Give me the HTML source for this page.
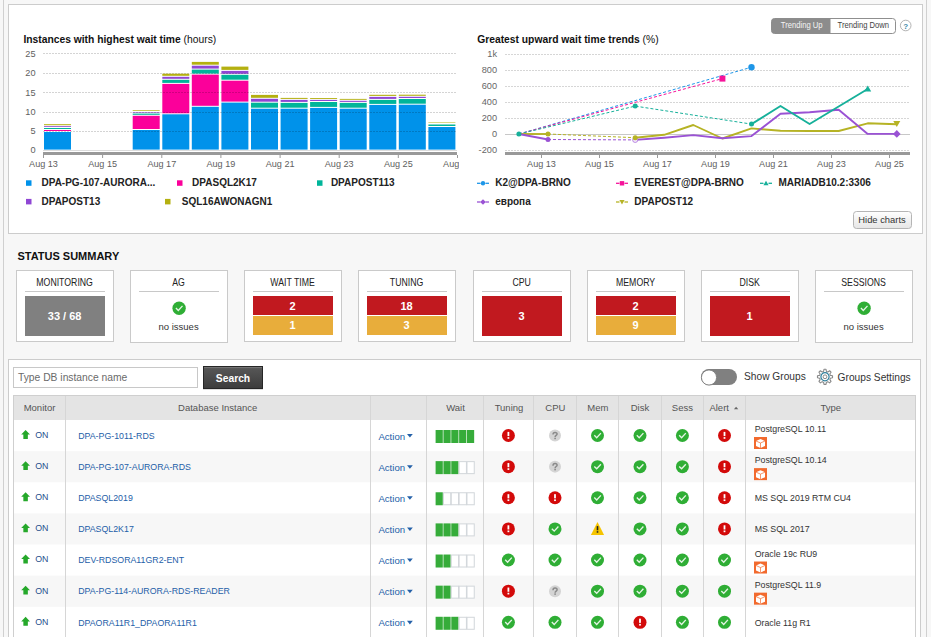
<!DOCTYPE html>
<html><head><meta charset="utf-8"><style>
html,body{margin:0;padding:0;width:931px;height:637px;overflow:hidden;background:#f7f7f7;}
body{position:relative;font-family:"Liberation Sans", sans-serif;}
svg text{font-family:"Liberation Sans", sans-serif;}
</style></head><body>
<svg width="931" height="637" viewBox="0 0 931 637" style="position:absolute;left:0;top:0">
<defs><clipPath id="c1"><rect x="0" y="150" width="459" height="30"/></clipPath></defs>
<line x1="3.5" y1="0" x2="3.5" y2="637" stroke="#d0d0d0"/>
<line x1="926.5" y1="0" x2="926.5" y2="637" stroke="#d0d0d0"/>
<rect x="8.5" y="4.5" width="914" height="229" fill="#fff" stroke="#cccccc"/>
<text x="35.5" y="56.8" text-anchor="end" font-size="9.2" fill="#606060">25</text>
<text x="35.5" y="76.3" text-anchor="end" font-size="9.2" fill="#606060">20</text>
<text x="35.5" y="95.8" text-anchor="end" font-size="9.2" fill="#606060">15</text>
<text x="35.5" y="115.3" text-anchor="end" font-size="9.2" fill="#606060">10</text>
<text x="35.5" y="133.9" text-anchor="end" font-size="9.2" fill="#606060">5</text>
<text x="35.5" y="152.60000000000002" text-anchor="end" font-size="9.2" fill="#606060">0</text>
<rect x="44.0" y="132" width="27" height="17.6" fill="#0092ea"/>
<rect x="44.0" y="130" width="27" height="1.0" fill="#fb009a"/>
<rect x="44.0" y="128" width="27" height="1.0" fill="#00b59a"/>
<rect x="44.0" y="126.2" width="27" height="0.8" fill="#8f46d4"/>
<rect x="44.0" y="124.2" width="27" height="1.0" fill="#b4b010"/>
<rect x="132.7" y="130" width="27" height="19.6" fill="#0092ea"/>
<rect x="132.7" y="115.8" width="27" height="13.2" fill="#fb009a"/>
<rect x="132.7" y="113.6" width="27" height="1.2" fill="#00b59a"/>
<rect x="132.7" y="112" width="27" height="0.6" fill="#8f46d4"/>
<rect x="132.7" y="110.3" width="27" height="0.7" fill="#b4b010"/>
<rect x="162.3" y="114.3" width="27" height="35.3" fill="#0092ea"/>
<rect x="162.3" y="83.9" width="27" height="29.4" fill="#fb009a"/>
<rect x="162.3" y="79.8" width="27" height="3.1" fill="#00b59a"/>
<rect x="162.3" y="76.8" width="27" height="2.0" fill="#8f46d4"/>
<rect x="162.3" y="73.7" width="27" height="2.1" fill="#b4b010"/>
<rect x="191.8" y="106.8" width="27" height="42.8" fill="#0092ea"/>
<rect x="191.8" y="74.6" width="27" height="31.2" fill="#fb009a"/>
<rect x="191.8" y="69.6" width="27" height="4.0" fill="#00b59a"/>
<rect x="191.8" y="65.7" width="27" height="2.9" fill="#8f46d4"/>
<rect x="191.8" y="61.9" width="27" height="2.8" fill="#b4b010"/>
<rect x="221.4" y="102.6" width="27" height="47.0" fill="#0092ea"/>
<rect x="221.4" y="80.7" width="27" height="20.9" fill="#fb009a"/>
<rect x="221.4" y="74.8" width="27" height="4.9" fill="#00b59a"/>
<rect x="221.4" y="70.9" width="27" height="2.9" fill="#8f46d4"/>
<rect x="221.4" y="66.6" width="27" height="3.3" fill="#b4b010"/>
<rect x="251.0" y="108.7" width="27" height="40.9" fill="#0092ea"/>
<rect x="251.0" y="102.7" width="27" height="5.0" fill="#00b59a"/>
<rect x="251.0" y="98.8" width="27" height="2.9" fill="#8f46d4"/>
<rect x="251.0" y="94.9" width="27" height="2.9" fill="#b4b010"/>
<rect x="280.6" y="108.7" width="27" height="40.9" fill="#0092ea"/>
<rect x="280.6" y="102.9" width="27" height="4.8" fill="#00b59a"/>
<rect x="280.6" y="99.9" width="27" height="2.0" fill="#8f46d4"/>
<rect x="280.6" y="97.9" width="27" height="1.0" fill="#b4b010"/>
<rect x="310.1" y="107.9" width="27" height="41.7" fill="#0092ea"/>
<rect x="310.1" y="102" width="27" height="4.9" fill="#00b59a"/>
<rect x="310.1" y="99.9" width="27" height="1.1" fill="#8f46d4"/>
<rect x="310.1" y="98" width="27" height="0.9" fill="#b4b010"/>
<rect x="339.7" y="108.7" width="27" height="40.9" fill="#0092ea"/>
<rect x="339.7" y="102.9" width="27" height="4.8" fill="#00b59a"/>
<rect x="339.7" y="100.8" width="27" height="1.1" fill="#8f46d4"/>
<rect x="339.7" y="98.9" width="27" height="0.9" fill="#b4b010"/>
<rect x="369.3" y="104.9" width="27" height="44.7" fill="#0092ea"/>
<rect x="369.3" y="99.9" width="27" height="4.0" fill="#00b59a"/>
<rect x="369.3" y="96.9" width="27" height="2.0" fill="#8f46d4"/>
<rect x="369.3" y="94.8" width="27" height="1.1" fill="#b4b010"/>
<rect x="398.8" y="104.7" width="27" height="44.9" fill="#0092ea"/>
<rect x="398.8" y="99" width="27" height="4.7" fill="#00b59a"/>
<rect x="398.8" y="96.8" width="27" height="1.2" fill="#8f46d4"/>
<rect x="398.8" y="94.7" width="27" height="1.1" fill="#b4b010"/>
<rect x="428.4" y="127" width="27" height="22.6" fill="#0092ea"/>
<rect x="428.4" y="124.5" width="27" height="1.5" fill="#00b59a"/>
<rect x="428.4" y="122" width="27" height="0.5" fill="#b4b010"/>
<line x1="43" y1="53.5" x2="457" y2="53.5" stroke="#000" stroke-opacity="0.17" stroke-width="1" stroke-dasharray="2,1"/>
<line x1="43" y1="73.5" x2="457" y2="73.5" stroke="#000" stroke-opacity="0.17" stroke-width="1" stroke-dasharray="2,1"/>
<line x1="43" y1="92.5" x2="457" y2="92.5" stroke="#000" stroke-opacity="0.17" stroke-width="1" stroke-dasharray="2,1"/>
<line x1="43" y1="112.5" x2="457" y2="112.5" stroke="#000" stroke-opacity="0.17" stroke-width="1" stroke-dasharray="2,1"/>
<line x1="43" y1="131.5" x2="457" y2="131.5" stroke="#000" stroke-opacity="0.17" stroke-width="1" stroke-dasharray="2,1"/>
<line x1="43" y1="150.5" x2="457" y2="150.5" stroke="#dcdcdc" stroke-width="1"/>
<rect x="43" y="152" width="414" height="3" fill="#999"/>
<line x1="43.5" y1="155" x2="43.5" y2="158" stroke="#999" stroke-width="1"/>
<line x1="102.6" y1="155" x2="102.6" y2="158" stroke="#999" stroke-width="1"/>
<line x1="161.8" y1="155" x2="161.8" y2="158" stroke="#999" stroke-width="1"/>
<line x1="220.9" y1="155" x2="220.9" y2="158" stroke="#999" stroke-width="1"/>
<line x1="280.1" y1="155" x2="280.1" y2="158" stroke="#999" stroke-width="1"/>
<line x1="339.2" y1="155" x2="339.2" y2="158" stroke="#999" stroke-width="1"/>
<line x1="398.3" y1="155" x2="398.3" y2="158" stroke="#999" stroke-width="1"/>
<line x1="457.5" y1="155" x2="457.5" y2="158" stroke="#999" stroke-width="1"/>
<g clip-path="url(#c1)">
<text x="43.5" y="166.5" text-anchor="middle" font-size="9.1" fill="#606060">Aug 13</text>
<text x="102.6" y="166.5" text-anchor="middle" font-size="9.1" fill="#606060">Aug 15</text>
<text x="161.8" y="166.5" text-anchor="middle" font-size="9.1" fill="#606060">Aug 17</text>
<text x="220.9" y="166.5" text-anchor="middle" font-size="9.1" fill="#606060">Aug 19</text>
<text x="280.1" y="166.5" text-anchor="middle" font-size="9.1" fill="#606060">Aug 21</text>
<text x="339.2" y="166.5" text-anchor="middle" font-size="9.1" fill="#606060">Aug 23</text>
<text x="398.3" y="166.5" text-anchor="middle" font-size="9.1" fill="#606060">Aug 25</text>
<text x="457.5" y="166.5" text-anchor="middle" font-size="9.1" fill="#606060">Aug 27</text>
</g>
<text x="23.4" y="43.2" font-size="10.3" fill="#111"><tspan font-weight="bold">Instances with highest wait time</tspan> (hours)</text>
<rect x="26" y="180.3" width="5.5" height="5.5" fill="#0092ea"/>
<text x="41.5" y="186.3" font-size="10" font-weight="bold" fill="#222">DPA-PG-107-AURORA...</text>
<rect x="177" y="180.3" width="5.5" height="5.5" fill="#fb009a"/>
<text x="192.1" y="186.3" font-size="10" font-weight="bold" fill="#222">DPASQL2K17</text>
<rect x="317" y="180.3" width="5.5" height="5.5" fill="#00b59a"/>
<text x="330.9" y="186.3" font-size="10" font-weight="bold" fill="#222">DPAPOST113</text>
<rect x="26" y="198.9" width="5.5" height="5.5" fill="#8f46d4"/>
<text x="41.5" y="204.9" font-size="10" font-weight="bold" fill="#222">DPAPOST13</text>
<rect x="165" y="198.9" width="5.5" height="5.5" fill="#b4b010"/>
<text x="181.8" y="204.9" font-size="10" font-weight="bold" fill="#222">SQL16AWONAGN1</text>
<line x1="505" y1="54.5" x2="910" y2="54.5" stroke="#d6d6d6" stroke-width="1" stroke-dasharray="2,1"/>
<text x="497" y="57.1" text-anchor="end" font-size="9.2" fill="#666">1k</text>
<line x1="505" y1="70.5" x2="910" y2="70.5" stroke="#d6d6d6" stroke-width="1" stroke-dasharray="2,1"/>
<text x="497" y="73.1" text-anchor="end" font-size="9.2" fill="#666">800</text>
<line x1="505" y1="86.5" x2="910" y2="86.5" stroke="#d6d6d6" stroke-width="1" stroke-dasharray="2,1"/>
<text x="497" y="89.1" text-anchor="end" font-size="9.2" fill="#666">600</text>
<line x1="505" y1="102.5" x2="910" y2="102.5" stroke="#d6d6d6" stroke-width="1" stroke-dasharray="2,1"/>
<text x="497" y="105.1" text-anchor="end" font-size="9.2" fill="#666">400</text>
<line x1="505" y1="118.5" x2="910" y2="118.5" stroke="#d6d6d6" stroke-width="1" stroke-dasharray="2,1"/>
<text x="497" y="121.1" text-anchor="end" font-size="9.2" fill="#666">200</text>
<text x="497" y="137.1" text-anchor="end" font-size="9.2" fill="#666">0</text>
<line x1="505" y1="150.5" x2="910" y2="150.5" stroke="#d6d6d6" stroke-width="1" stroke-dasharray="2,1"/>
<text x="497" y="153.1" text-anchor="end" font-size="9.2" fill="#666">-200</text>
<line x1="505" y1="134.5" x2="910" y2="134.5" stroke="#c8c8c8" stroke-width="1"/>
<rect x="505" y="152" width="405" height="3" fill="#999"/>
<line x1="541.5" y1="155" x2="541.5" y2="158" stroke="#999" stroke-width="1"/>
<text x="541.5" y="167" text-anchor="middle" font-size="9.1" fill="#606060">Aug 13</text>
<line x1="599.5" y1="155" x2="599.5" y2="158" stroke="#999" stroke-width="1"/>
<text x="599.5" y="167" text-anchor="middle" font-size="9.1" fill="#606060">Aug 15</text>
<line x1="657.5" y1="155" x2="657.5" y2="158" stroke="#999" stroke-width="1"/>
<text x="657.5" y="167" text-anchor="middle" font-size="9.1" fill="#606060">Aug 17</text>
<line x1="715.5" y1="155" x2="715.5" y2="158" stroke="#999" stroke-width="1"/>
<text x="715.5" y="167" text-anchor="middle" font-size="9.1" fill="#606060">Aug 19</text>
<line x1="773.5" y1="155" x2="773.5" y2="158" stroke="#999" stroke-width="1"/>
<text x="773.5" y="167" text-anchor="middle" font-size="9.1" fill="#606060">Aug 21</text>
<line x1="831.5" y1="155" x2="831.5" y2="158" stroke="#999" stroke-width="1"/>
<text x="831.5" y="167" text-anchor="middle" font-size="9.1" fill="#606060">Aug 23</text>
<line x1="889.5" y1="155" x2="889.5" y2="158" stroke="#999" stroke-width="1"/>
<text x="889.5" y="167" text-anchor="middle" font-size="9.1" fill="#606060">Aug 25</text>
<polyline points="518.9,134 751.5,67.2" fill="none" stroke="#1e96e8" stroke-width="1.0" stroke-dasharray="3,2" stroke-linejoin="round"/>
<polyline points="518.9,134 722.4,78.6" fill="none" stroke="#f5139a" stroke-width="1.0" stroke-dasharray="3,2" stroke-linejoin="round"/>
<polyline points="518.9,134 635.2,106.1 751.5,124.1" fill="none" stroke="#16b09a" stroke-width="1.0" stroke-dasharray="3,2" stroke-linejoin="round"/>
<polyline points="548.0,134 635.2,137.7" fill="none" stroke="#b6b325" stroke-width="1.0" stroke-dasharray="3,2" stroke-linejoin="round"/>
<polyline points="548.0,139.5 635.2,139.9" fill="none" stroke="#9a52d4" stroke-width="1.0" stroke-dasharray="3,2" stroke-linejoin="round"/>
<polyline points="518.9,134 548.0,134" fill="none" stroke="#b6b325" stroke-width="1.9" stroke-linejoin="round"/>
<polyline points="635.2,137.7 664.2,134.8 693.3,125 722.4,138.5 751.5,128.4 780.5,130.8 809.6,131 838.7,131 867.7,123.3 896.8,124.3" fill="none" stroke="#b6b325" stroke-width="1.9" stroke-linejoin="round"/>
<polyline points="518.9,134 548.0,139.5" fill="none" stroke="#9a52d4" stroke-width="1.9" stroke-linejoin="round"/>
<polyline points="635.2,139.9 664.2,137.7 693.3,135.1 722.4,138.2 751.5,136.1 780.5,113.7 809.6,112.2 838.7,109.7 867.7,133.9 896.8,133.9" fill="none" stroke="#9a52d4" stroke-width="1.9" stroke-linejoin="round"/>
<polyline points="751.5,124.1 780.5,106 809.6,124 867.7,89" fill="none" stroke="#16b09a" stroke-width="1.9" stroke-linejoin="round"/>
<circle cx="751.5" cy="67.2" r="3.2" fill="#1e96e8"/>
<rect x="719.4" y="75.6" width="6" height="6" fill="#f5139a"/>
<circle cx="548.0" cy="134" r="2.5" fill="#b6b325"/>
<circle cx="548.0" cy="139.5" r="2.5" fill="#9a52d4"/>
<circle cx="635.2" cy="139.9" r="2.6" fill="#f3e8fb" stroke="#9a52d4" stroke-width="0.6"/>
<circle cx="635.2" cy="137.7" r="2.5" fill="#b6b325"/>
<circle cx="635.2" cy="106.1" r="2.5" fill="#16b09a"/>
<circle cx="751.5" cy="124.1" r="2.5" fill="#16b09a"/>
<circle cx="518.9" cy="134" r="2.5" fill="#16b09a"/>
<polygon points="867.7,85.5 871.2,91.5 864.2,91.5" fill="#16b09a"/>
<polygon points="893.3,121 900.3,121 896.8,127" fill="#b6b325"/>
<polygon points="896.8,130 900.6,133.9 896.8,137.8 893.0,133.9" fill="#9a52d4"/>
<text x="477.2" y="43" font-size="10.3" fill="#111"><tspan font-weight="bold">Greatest upward wait time trends</tspan> (%)</text>
<line x1="477" y1="183.3" x2="480.5" y2="183.3" stroke="#1e96e8" stroke-width="1.3"/><line x1="485.5" y1="183.3" x2="489" y2="183.3" stroke="#1e96e8" stroke-width="1.3"/><circle cx="483" cy="183.3" r="2.2" fill="#1e96e8"/>
<text x="495.2" y="186.3" font-size="10" font-weight="bold" fill="#222">K2@DPA-BRNO</text>
<line x1="616" y1="183.3" x2="619.5" y2="183.3" stroke="#f5139a" stroke-width="1.3"/><line x1="624.5" y1="183.3" x2="628" y2="183.3" stroke="#f5139a" stroke-width="1.3"/><rect x="619.8" y="181.10000000000002" width="4.4" height="4.4" fill="#f5139a"/>
<text x="634.3" y="186.3" font-size="10" font-weight="bold" fill="#222">EVEREST@DPA-BRNO</text>
<line x1="760" y1="183.3" x2="763.5" y2="183.3" stroke="#16b09a" stroke-width="1.3"/><line x1="768.5" y1="183.3" x2="772" y2="183.3" stroke="#16b09a" stroke-width="1.3"/><polygon points="766,180.8 768.6,185.3 763.4,185.3" fill="#16b09a"/>
<text x="778.5" y="186.3" font-size="10" font-weight="bold" fill="#222">MARIADB10.2:3306</text>
<line x1="477" y1="202" x2="480.5" y2="202" stroke="#9a52d4" stroke-width="1.3"/><line x1="485.5" y1="202" x2="489" y2="202" stroke="#9a52d4" stroke-width="1.3"/><polygon points="483,199.2 485.8,202 483,204.8 480.2,202" fill="#9a52d4"/>
<text x="495.2" y="205" font-size="10" font-weight="bold" fill="#222">европа</text>
<line x1="616" y1="202" x2="619.5" y2="202" stroke="#b6b325" stroke-width="1.3"/><line x1="624.5" y1="202" x2="628" y2="202" stroke="#b6b325" stroke-width="1.3"/><polygon points="619.4,200 624.6,200 622,204.5" fill="#b6b325"/>
<text x="634.3" y="205" font-size="10" font-weight="bold" fill="#222">DPAPOST12</text>
<!-- trending toggle -->
<rect x="771.5" y="18.5" width="124" height="15" rx="3" fill="#fff" stroke="#8f8f8f"/>
<path d="M830.5,18.5 L774.5,18.5 Q771.5,18.5 771.5,21.5 L771.5,30.5 Q771.5,33.5 774.5,33.5 L830.5,33.5 Z" fill="#8c8c8c"/>
<text transform="translate(801.7,28.4) scale(0.85,1)" text-anchor="middle" font-size="9" fill="#f4f4f4">Trending Up</text>
<text transform="translate(863.3,28.4) scale(0.85,1)" text-anchor="middle" font-size="9" fill="#444">Trending Down</text>
<circle cx="905.7" cy="25.5" r="5.3" fill="#fff" stroke="#a0a0a0" stroke-width="0.8"/>
<text x="905.7" y="28.6" text-anchor="middle" font-size="8" font-weight="bold" fill="#3d8aa8">?</text>
<!-- hide charts -->
<defs><linearGradient id="gb" x1="0" y1="0" x2="0" y2="1"><stop offset="0" stop-color="#ffffff"/><stop offset="1" stop-color="#e6e6e6"/></linearGradient>
<linearGradient id="gs" x1="0" y1="0" x2="0" y2="1"><stop offset="0" stop-color="#585858"/><stop offset="1" stop-color="#3c3c3c"/></linearGradient></defs>
<rect x="853.5" y="211.5" width="58" height="17" rx="3" fill="url(#gb)" stroke="#b5b5b5"/>
<text x="882" y="223" text-anchor="middle" font-size="9.4" fill="#333">Hide charts</text>
<text x="17.4" y="259.8" font-size="11" font-weight="bold" fill="#111">STATUS SUMMARY</text>
<rect x="16.5" y="270.5" width="97" height="71" fill="#fff" stroke="#cacaca"/>
<text transform="translate(64.6,286.2) scale(0.875,1)" text-anchor="middle" font-size="10" fill="#222">MONITORING</text>
<line x1="25" y1="291.5" x2="105" y2="291.5" stroke="#c8c8c8"/>
<rect x="25" y="296" width="80" height="40" fill="#808080"/>
<text x="64.6" y="320" text-anchor="middle" font-size="11" font-weight="bold" fill="#fff">33 / 68</text>
<rect x="130.5" y="270.5" width="97" height="72" fill="#fff" stroke="#cacaca"/>
<text transform="translate(178.6,286.2) scale(0.875,1)" text-anchor="middle" font-size="10" fill="#222">AG</text>
<line x1="139" y1="291.5" x2="219" y2="291.5" stroke="#c8c8c8"/>
<circle cx="179.1" cy="308.3" r="6.7" fill="#2fae35"/><polyline points="175.9,308.1 178.29999999999998,310.5 182.5,305.90000000000003" fill="none" stroke="#e6f4e6" stroke-width="1.35"/>
<text x="178.6" y="329.8" text-anchor="middle" font-size="9.5" fill="#333">no issues</text>
<rect x="244.5" y="270.5" width="97" height="71" fill="#fff" stroke="#cacaca"/>
<text transform="translate(292.6,286.2) scale(0.875,1)" text-anchor="middle" font-size="10" fill="#222">WAIT TIME</text>
<line x1="253" y1="291.5" x2="333" y2="291.5" stroke="#c8c8c8"/>
<rect x="253" y="296" width="80" height="19" fill="#c1191f"/>
<rect x="253" y="316" width="80" height="19" fill="#e8ad3b"/>
<text x="292.6" y="309.7" text-anchor="middle" font-size="11" font-weight="bold" fill="#fff">2</text>
<text x="292.6" y="328.8" text-anchor="middle" font-size="11" font-weight="bold" fill="#fff">1</text>
<rect x="358.5" y="270.5" width="97" height="71" fill="#fff" stroke="#cacaca"/>
<text transform="translate(406.6,286.2) scale(0.875,1)" text-anchor="middle" font-size="10" fill="#222">TUNING</text>
<line x1="367" y1="291.5" x2="447" y2="291.5" stroke="#c8c8c8"/>
<rect x="367" y="296" width="80" height="19" fill="#c1191f"/>
<rect x="367" y="316" width="80" height="19" fill="#e8ad3b"/>
<text x="406.6" y="309.7" text-anchor="middle" font-size="11" font-weight="bold" fill="#fff">18</text>
<text x="406.6" y="328.8" text-anchor="middle" font-size="11" font-weight="bold" fill="#fff">3</text>
<rect x="473.5" y="270.5" width="97" height="71" fill="#fff" stroke="#cacaca"/>
<text transform="translate(521.6,286.2) scale(0.875,1)" text-anchor="middle" font-size="10" fill="#222">CPU</text>
<line x1="482" y1="291.5" x2="562" y2="291.5" stroke="#c8c8c8"/>
<rect x="482" y="296" width="80" height="40" fill="#c1191f"/>
<text x="521.6" y="320" text-anchor="middle" font-size="11" font-weight="bold" fill="#fff">3</text>
<rect x="587.5" y="270.5" width="97" height="71" fill="#fff" stroke="#cacaca"/>
<text transform="translate(635.6,286.2) scale(0.875,1)" text-anchor="middle" font-size="10" fill="#222">MEMORY</text>
<line x1="596" y1="291.5" x2="676" y2="291.5" stroke="#c8c8c8"/>
<rect x="596" y="296" width="80" height="19" fill="#c1191f"/>
<rect x="596" y="316" width="80" height="19" fill="#e8ad3b"/>
<text x="635.6" y="309.7" text-anchor="middle" font-size="11" font-weight="bold" fill="#fff">2</text>
<text x="635.6" y="328.8" text-anchor="middle" font-size="11" font-weight="bold" fill="#fff">9</text>
<rect x="701.5" y="270.5" width="97" height="71" fill="#fff" stroke="#cacaca"/>
<text transform="translate(749.6,286.2) scale(0.875,1)" text-anchor="middle" font-size="10" fill="#222">DISK</text>
<line x1="710" y1="291.5" x2="790" y2="291.5" stroke="#c8c8c8"/>
<rect x="710" y="296" width="80" height="40" fill="#c1191f"/>
<text x="749.6" y="320" text-anchor="middle" font-size="11" font-weight="bold" fill="#fff">1</text>
<rect x="815.5" y="270.5" width="97" height="72" fill="#fff" stroke="#cacaca"/>
<text transform="translate(863.6,286.2) scale(0.875,1)" text-anchor="middle" font-size="10" fill="#222">SESSIONS</text>
<line x1="824" y1="291.5" x2="904" y2="291.5" stroke="#c8c8c8"/>
<circle cx="864.1" cy="308.3" r="6.7" fill="#2fae35"/><polyline points="860.9,308.1 863.3000000000001,310.5 867.5,305.90000000000003" fill="none" stroke="#e6f4e6" stroke-width="1.35"/>
<text x="863.6" y="329.8" text-anchor="middle" font-size="9.5" fill="#333">no issues</text>
<!-- table panel -->
<rect x="8.5" y="359.5" width="912" height="300" fill="#fff" stroke="#cccccc"/>
<rect x="13.5" y="367.5" width="184" height="20" fill="#fff" stroke="#c8c8c8"/>
<text x="18" y="381.4" font-size="10.3" fill="#6a6a6a">Type DB instance name</text>
<rect x="203" y="388.5" width="60" height="1.2" fill="#cfcfcf"/><rect x="203.5" y="366.5" width="59" height="22" fill="url(#gs)" stroke="#262626"/><line x1="204" y1="367.6" x2="262" y2="367.6" stroke="#7a7a7a" stroke-width="0.9"/>
<text x="233" y="381.8" text-anchor="middle" font-size="10.3" font-weight="bold" fill="#fff">Search</text>
<rect x="701" y="369" width="36" height="16" rx="8" fill="#808080"/>
<circle cx="709" cy="377.5" r="7.6" fill="#fff" stroke="#808080" stroke-width="1"/>
<text x="744" y="380.1" font-size="10.2" fill="#333">Show Groups</text>
<g transform="translate(825,376.8) rotate(0)"><path d="M7.53,-1.01 L7.53,1.01 L5.41,1.44 L4.84,2.81 L6.04,4.61 L4.61,6.04 L2.81,4.84 L1.44,5.41 L1.01,7.53 L-1.01,7.53 L-1.44,5.41 L-2.81,4.84 L-4.61,6.04 L-6.04,4.61 L-4.84,2.81 L-5.41,1.44 L-7.53,1.01 L-7.53,-1.01 L-5.41,-1.44 L-4.84,-2.81 L-6.04,-4.61 L-4.61,-6.04 L-2.81,-4.84 L-1.44,-5.41 L-1.01,-7.53 L1.01,-7.53 L1.44,-5.41 L2.81,-4.84 L4.61,-6.04 L6.04,-4.61 L4.84,-2.81 L5.41,-1.44 Z" fill="#fff" stroke="#8a8a8a" stroke-width="1.1" stroke-linejoin="round"/><circle r="4.1" fill="none" stroke="#2f7f9c" stroke-width="1.2"/><circle r="1.9" fill="none" stroke="#8a8a8a" stroke-width="1"/></g>
<text x="837.6" y="380.9" font-size="10.2" fill="#333">Groups Settings</text>
<rect x="14" y="451.13" width="902" height="31.13" fill="#f7f7f7"/>
<rect x="14" y="513.39" width="902" height="31.13" fill="#f7f7f7"/>
<rect x="14" y="575.65" width="902" height="31.13" fill="#f7f7f7"/>
<rect x="13.5" y="395.5" width="902" height="260" fill="none" stroke="#cfcfcf"/>
<rect x="14" y="396" width="901" height="24" fill="#e4e4e4"/>
<line x1="65.5" y1="396" x2="65.5" y2="637" stroke="#d6d6d6"/>
<line x1="370.5" y1="396" x2="370.5" y2="637" stroke="#d6d6d6"/>
<line x1="426.5" y1="396" x2="426.5" y2="637" stroke="#d6d6d6"/>
<line x1="483.5" y1="396" x2="483.5" y2="637" stroke="#d6d6d6"/>
<line x1="533.5" y1="396" x2="533.5" y2="637" stroke="#d6d6d6"/>
<line x1="576.5" y1="396" x2="576.5" y2="637" stroke="#d6d6d6"/>
<line x1="618.5" y1="396" x2="618.5" y2="637" stroke="#d6d6d6"/>
<line x1="661.5" y1="396" x2="661.5" y2="637" stroke="#d6d6d6"/>
<line x1="703.5" y1="396" x2="703.5" y2="637" stroke="#d6d6d6"/>
<line x1="745.5" y1="396" x2="745.5" y2="637" stroke="#d6d6d6"/>
<text x="39.5" y="411" text-anchor="middle" font-size="9.5" fill="#555">Monitor</text>
<text x="217.7" y="411" text-anchor="middle" font-size="9.5" fill="#555">Database Instance</text>
<text x="455.5" y="411" text-anchor="middle" font-size="9.5" fill="#555">Wait</text>
<text x="509" y="411" text-anchor="middle" font-size="9.5" fill="#555">Tuning</text>
<text x="555.3" y="411" text-anchor="middle" font-size="9.5" fill="#555">CPU</text>
<text x="597.8" y="411" text-anchor="middle" font-size="9.5" fill="#555">Mem</text>
<text x="640" y="411" text-anchor="middle" font-size="9.5" fill="#555">Disk</text>
<text x="682.4" y="411" text-anchor="middle" font-size="9.5" fill="#555">Sess</text>
<text x="719.2" y="411" text-anchor="middle" font-size="9.5" fill="#555">Alert</text>
<text x="830.7" y="411" text-anchor="middle" font-size="9.5" fill="#555">Type</text>
<polygon points="736.1,406.7 738.3,409.2 733.9,409.2" fill="#666"/>
<path d="M25.60,430.00 L30.00,434.60 L27.85,434.60 L27.85,438.90 L23.35,438.90 L23.35,434.60 L21.20,434.60 Z" fill="#25a82a"/>
<text x="35.2" y="437.90" font-size="8.8" fill="#1f4f8c">ON</text>
<text x="78.2" y="438.8" font-size="8.8" fill="#2460a8">DPA-PG-1011-RDS</text>
<text x="378.4" y="439.6" font-size="9.6" fill="#2460a8">Action</text>
<polygon points="407,434.0 412.8,434.0 409.9,437.6" fill="#2460a8"/>
<rect x="435.60" y="430.0" width="7.2" height="13" fill="#36ac3a"/>
<rect x="443.44" y="430.0" width="7.2" height="13" fill="#36ac3a"/>
<rect x="451.28" y="430.0" width="7.2" height="13" fill="#36ac3a"/>
<rect x="459.12" y="430.0" width="7.2" height="13" fill="#36ac3a"/>
<rect x="466.96" y="430.0" width="7.2" height="13" fill="#36ac3a"/>
<circle cx="508.4" cy="435.5" r="6.5" fill="#d30a0a"/><rect x="507.5" y="431.9" width="1.8" height="4.2" fill="#fff"/><rect x="507.5" y="437.1" width="1.8" height="1.7" fill="#fff"/>
<circle cx="555" cy="435.5" r="6" fill="#d4d4d4"/><path d="M553.00,434.50 C553.00,431.80 557.10,431.80 557.10,434.10 C557.10,435.40 555.10,435.40 555.10,437.00" fill="none" stroke="#8a8a8a" stroke-width="1.5"/><rect x="554.30" y="437.70" width="1.6" height="1.5" fill="#8a8a8a"/>
<circle cx="597.5" cy="435.5" r="6.5" fill="#2fae35"/><polyline points="594.3,435.3 596.7,437.7 600.9,433.1" fill="none" stroke="#e6f4e6" stroke-width="1.35"/>
<circle cx="640" cy="435.5" r="6.5" fill="#2fae35"/><polyline points="636.8,435.3 639.2,437.7 643.4,433.1" fill="none" stroke="#e6f4e6" stroke-width="1.35"/>
<circle cx="682.4" cy="435.5" r="6.5" fill="#2fae35"/><polyline points="679.1999999999999,435.3 681.6,437.7 685.8,433.1" fill="none" stroke="#e6f4e6" stroke-width="1.35"/>
<circle cx="724.5" cy="435.5" r="6.5" fill="#d30a0a"/><rect x="723.6" y="431.9" width="1.8" height="4.2" fill="#fff"/><rect x="723.6" y="437.1" width="1.8" height="1.7" fill="#fff"/>
<text x="754.7" y="432.20" font-size="8.8" fill="#333">PostgreSQL 10.11</text>
<rect x="754" y="437.0" width="13" height="12" fill="#f26a2e"/><path d="M760.5,439.0 L765,441.0 L765,446.0 L760.5,448.0 L756,446.0 L756,441.0 Z" fill="#fff"/><path d="M756,441.0 L760.5,443.0 L765,441.0 M760.5,443.0 L760.5,448.0" stroke="#f26a2e" stroke-width="0.7" fill="none"/>
<path d="M25.60,461.13 L30.00,465.73 L27.85,465.73 L27.85,470.03 L23.35,470.03 L23.35,465.73 L21.20,465.73 Z" fill="#25a82a"/>
<text x="35.2" y="469.03" font-size="8.8" fill="#1f4f8c">ON</text>
<text x="78.2" y="469.93" font-size="8.8" fill="#2460a8">DPA-PG-107-AURORA-RDS</text>
<text x="378.4" y="470.73" font-size="9.6" fill="#2460a8">Action</text>
<polygon points="407,465.13 412.8,465.13 409.9,468.73" fill="#2460a8"/>
<rect x="435.60" y="461.13" width="7.2" height="13" fill="#36ac3a"/>
<rect x="443.44" y="461.13" width="7.2" height="13" fill="#36ac3a"/>
<rect x="451.28" y="461.13" width="7.2" height="13" fill="#36ac3a"/>
<rect x="459.12" y="461.63" width="7.3" height="12" fill="#fff" stroke="#d2d6da" stroke-width="1"/>
<rect x="466.96" y="461.63" width="7.3" height="12" fill="#fff" stroke="#d2d6da" stroke-width="1"/>
<circle cx="508.4" cy="466.63" r="6.5" fill="#d30a0a"/><rect x="507.5" y="463.03" width="1.8" height="4.2" fill="#fff"/><rect x="507.5" y="468.23" width="1.8" height="1.7" fill="#fff"/>
<circle cx="555" cy="466.63" r="6" fill="#d4d4d4"/><path d="M553.00,465.63 C553.00,462.93 557.10,462.93 557.10,465.23 C557.10,466.53 555.10,466.53 555.10,468.13" fill="none" stroke="#8a8a8a" stroke-width="1.5"/><rect x="554.30" y="468.83" width="1.6" height="1.5" fill="#8a8a8a"/>
<circle cx="597.5" cy="466.63" r="6.5" fill="#2fae35"/><polyline points="594.3,466.43 596.7,468.83 600.9,464.23" fill="none" stroke="#e6f4e6" stroke-width="1.35"/>
<circle cx="640" cy="466.63" r="6.5" fill="#2fae35"/><polyline points="636.8,466.43 639.2,468.83 643.4,464.23" fill="none" stroke="#e6f4e6" stroke-width="1.35"/>
<circle cx="682.4" cy="466.63" r="6.5" fill="#2fae35"/><polyline points="679.1999999999999,466.43 681.6,468.83 685.8,464.23" fill="none" stroke="#e6f4e6" stroke-width="1.35"/>
<circle cx="724.5" cy="466.63" r="6.5" fill="#d30a0a"/><rect x="723.6" y="463.03" width="1.8" height="4.2" fill="#fff"/><rect x="723.6" y="468.23" width="1.8" height="1.7" fill="#fff"/>
<text x="754.7" y="463.33" font-size="8.8" fill="#333">PostgreSQL 10.14</text>
<rect x="754" y="468.13" width="13" height="12" fill="#f26a2e"/><path d="M760.5,470.13 L765,472.13 L765,477.13 L760.5,479.13 L756,477.13 L756,472.13 Z" fill="#fff"/><path d="M756,472.13 L760.5,474.13 L765,472.13 M760.5,474.13 L760.5,479.13" stroke="#f26a2e" stroke-width="0.7" fill="none"/>
<path d="M25.60,492.26 L30.00,496.86 L27.85,496.86 L27.85,501.16 L23.35,501.16 L23.35,496.86 L21.20,496.86 Z" fill="#25a82a"/>
<text x="35.2" y="500.16" font-size="8.8" fill="#1f4f8c">ON</text>
<text x="78.2" y="501.06" font-size="8.8" fill="#2460a8">DPASQL2019</text>
<text x="378.4" y="501.86" font-size="9.6" fill="#2460a8">Action</text>
<polygon points="407,496.26 412.8,496.26 409.9,499.86" fill="#2460a8"/>
<rect x="435.60" y="492.26" width="7.2" height="13" fill="#36ac3a"/>
<rect x="443.44" y="492.76" width="7.3" height="12" fill="#fff" stroke="#d2d6da" stroke-width="1"/>
<rect x="451.28" y="492.76" width="7.3" height="12" fill="#fff" stroke="#d2d6da" stroke-width="1"/>
<rect x="459.12" y="492.76" width="7.3" height="12" fill="#fff" stroke="#d2d6da" stroke-width="1"/>
<rect x="466.96" y="492.76" width="7.3" height="12" fill="#fff" stroke="#d2d6da" stroke-width="1"/>
<circle cx="508.4" cy="497.76" r="6.5" fill="#d30a0a"/><rect x="507.5" y="494.15999999999997" width="1.8" height="4.2" fill="#fff"/><rect x="507.5" y="499.36" width="1.8" height="1.7" fill="#fff"/>
<circle cx="555" cy="497.76" r="6.5" fill="#d30a0a"/><rect x="554.1" y="494.15999999999997" width="1.8" height="4.2" fill="#fff"/><rect x="554.1" y="499.36" width="1.8" height="1.7" fill="#fff"/>
<circle cx="597.5" cy="497.76" r="6.5" fill="#2fae35"/><polyline points="594.3,497.56 596.7,499.96 600.9,495.36" fill="none" stroke="#e6f4e6" stroke-width="1.35"/>
<circle cx="640" cy="497.76" r="6.5" fill="#2fae35"/><polyline points="636.8,497.56 639.2,499.96 643.4,495.36" fill="none" stroke="#e6f4e6" stroke-width="1.35"/>
<circle cx="682.4" cy="497.76" r="6.5" fill="#2fae35"/><polyline points="679.1999999999999,497.56 681.6,499.96 685.8,495.36" fill="none" stroke="#e6f4e6" stroke-width="1.35"/>
<circle cx="724.5" cy="497.76" r="6.5" fill="#d30a0a"/><rect x="723.6" y="494.15999999999997" width="1.8" height="4.2" fill="#fff"/><rect x="723.6" y="499.36" width="1.8" height="1.7" fill="#fff"/>
<text x="754.7" y="501.26" font-size="8.8" fill="#333">MS SQL 2019 RTM CU4</text>
<path d="M25.60,523.39 L30.00,527.99 L27.85,527.99 L27.85,532.29 L23.35,532.29 L23.35,527.99 L21.20,527.99 Z" fill="#25a82a"/>
<text x="35.2" y="531.29" font-size="8.8" fill="#1f4f8c">ON</text>
<text x="78.2" y="532.1899999999999" font-size="8.8" fill="#2460a8">DPASQL2K17</text>
<text x="378.4" y="532.99" font-size="9.6" fill="#2460a8">Action</text>
<polygon points="407,527.39 412.8,527.39 409.9,530.99" fill="#2460a8"/>
<rect x="435.60" y="523.39" width="7.2" height="13" fill="#36ac3a"/>
<rect x="443.44" y="523.39" width="7.2" height="13" fill="#36ac3a"/>
<rect x="451.28" y="523.39" width="7.2" height="13" fill="#36ac3a"/>
<rect x="459.12" y="523.89" width="7.3" height="12" fill="#fff" stroke="#d2d6da" stroke-width="1"/>
<rect x="466.96" y="523.89" width="7.3" height="12" fill="#fff" stroke="#d2d6da" stroke-width="1"/>
<circle cx="508.4" cy="528.89" r="6.5" fill="#d30a0a"/><rect x="507.5" y="525.29" width="1.8" height="4.2" fill="#fff"/><rect x="507.5" y="530.49" width="1.8" height="1.7" fill="#fff"/>
<circle cx="555" cy="528.89" r="6.5" fill="#2fae35"/><polyline points="551.8,528.6899999999999 554.2,531.09 558.4,526.49" fill="none" stroke="#e6f4e6" stroke-width="1.35"/>
<polygon points="597.5,522.09 604.1,535.09 590.9,535.09" fill="#f5c400"/><rect x="596.7" y="526.09" width="1.6" height="4.2" fill="#222"/><rect x="596.7" y="531.1899999999999" width="1.6" height="1.5" fill="#222"/>
<circle cx="640" cy="528.89" r="6.5" fill="#2fae35"/><polyline points="636.8,528.6899999999999 639.2,531.09 643.4,526.49" fill="none" stroke="#e6f4e6" stroke-width="1.35"/>
<circle cx="682.4" cy="528.89" r="6.5" fill="#2fae35"/><polyline points="679.1999999999999,528.6899999999999 681.6,531.09 685.8,526.49" fill="none" stroke="#e6f4e6" stroke-width="1.35"/>
<circle cx="724.5" cy="528.89" r="6.5" fill="#d30a0a"/><rect x="723.6" y="525.29" width="1.8" height="4.2" fill="#fff"/><rect x="723.6" y="530.49" width="1.8" height="1.7" fill="#fff"/>
<text x="754.7" y="532.39" font-size="8.8" fill="#333">MS SQL 2017</text>
<path d="M25.60,554.52 L30.00,559.12 L27.85,559.12 L27.85,563.42 L23.35,563.42 L23.35,559.12 L21.20,559.12 Z" fill="#25a82a"/>
<text x="35.2" y="562.42" font-size="8.8" fill="#1f4f8c">ON</text>
<text x="78.2" y="563.3199999999999" font-size="8.8" fill="#2460a8">DEV-RDSORA11GR2-ENT</text>
<text x="378.4" y="564.12" font-size="9.6" fill="#2460a8">Action</text>
<polygon points="407,558.52 412.8,558.52 409.9,562.12" fill="#2460a8"/>
<rect x="435.60" y="554.52" width="7.2" height="13" fill="#36ac3a"/>
<rect x="443.44" y="554.52" width="7.2" height="13" fill="#36ac3a"/>
<rect x="451.28" y="555.02" width="7.3" height="12" fill="#fff" stroke="#d2d6da" stroke-width="1"/>
<rect x="459.12" y="555.02" width="7.3" height="12" fill="#fff" stroke="#d2d6da" stroke-width="1"/>
<rect x="466.96" y="555.02" width="7.3" height="12" fill="#fff" stroke="#d2d6da" stroke-width="1"/>
<circle cx="508.4" cy="560.02" r="6.5" fill="#2fae35"/><polyline points="505.2,559.8199999999999 507.59999999999997,562.22 511.79999999999995,557.62" fill="none" stroke="#e6f4e6" stroke-width="1.35"/>
<circle cx="555" cy="560.02" r="6.5" fill="#2fae35"/><polyline points="551.8,559.8199999999999 554.2,562.22 558.4,557.62" fill="none" stroke="#e6f4e6" stroke-width="1.35"/>
<circle cx="597.5" cy="560.02" r="6.5" fill="#2fae35"/><polyline points="594.3,559.8199999999999 596.7,562.22 600.9,557.62" fill="none" stroke="#e6f4e6" stroke-width="1.35"/>
<circle cx="640" cy="560.02" r="6.5" fill="#2fae35"/><polyline points="636.8,559.8199999999999 639.2,562.22 643.4,557.62" fill="none" stroke="#e6f4e6" stroke-width="1.35"/>
<circle cx="682.4" cy="560.02" r="6.5" fill="#2fae35"/><polyline points="679.1999999999999,559.8199999999999 681.6,562.22 685.8,557.62" fill="none" stroke="#e6f4e6" stroke-width="1.35"/>
<circle cx="724.5" cy="560.02" r="6.5" fill="#2fae35"/><polyline points="721.3,559.8199999999999 723.7,562.22 727.9,557.62" fill="none" stroke="#e6f4e6" stroke-width="1.35"/>
<text x="754.7" y="556.72" font-size="8.8" fill="#333">Oracle 19c RU9</text>
<rect x="754" y="561.52" width="13" height="12" fill="#f26a2e"/><path d="M760.5,563.52 L765,565.52 L765,570.52 L760.5,572.52 L756,570.52 L756,565.52 Z" fill="#fff"/><path d="M756,565.52 L760.5,567.52 L765,565.52 M760.5,567.52 L760.5,572.52" stroke="#f26a2e" stroke-width="0.7" fill="none"/>
<path d="M25.60,585.65 L30.00,590.25 L27.85,590.25 L27.85,594.55 L23.35,594.55 L23.35,590.25 L21.20,590.25 Z" fill="#25a82a"/>
<text x="35.2" y="593.55" font-size="8.8" fill="#1f4f8c">ON</text>
<text x="78.2" y="594.4499999999999" font-size="8.8" fill="#2460a8">DPA-PG-114-AURORA-RDS-READER</text>
<text x="378.4" y="595.25" font-size="9.6" fill="#2460a8">Action</text>
<polygon points="407,589.65 412.8,589.65 409.9,593.25" fill="#2460a8"/>
<rect x="435.60" y="585.65" width="7.2" height="13" fill="#36ac3a"/>
<rect x="443.44" y="585.65" width="7.2" height="13" fill="#36ac3a"/>
<rect x="451.28" y="586.15" width="7.3" height="12" fill="#fff" stroke="#d2d6da" stroke-width="1"/>
<rect x="459.12" y="586.15" width="7.3" height="12" fill="#fff" stroke="#d2d6da" stroke-width="1"/>
<rect x="466.96" y="586.15" width="7.3" height="12" fill="#fff" stroke="#d2d6da" stroke-width="1"/>
<circle cx="508.4" cy="591.15" r="6.5" fill="#d30a0a"/><rect x="507.5" y="587.55" width="1.8" height="4.2" fill="#fff"/><rect x="507.5" y="592.75" width="1.8" height="1.7" fill="#fff"/>
<circle cx="555" cy="591.15" r="6" fill="#d4d4d4"/><path d="M553.00,590.15 C553.00,587.45 557.10,587.45 557.10,589.75 C557.10,591.05 555.10,591.05 555.10,592.65" fill="none" stroke="#8a8a8a" stroke-width="1.5"/><rect x="554.30" y="593.35" width="1.6" height="1.5" fill="#8a8a8a"/>
<circle cx="597.5" cy="591.15" r="6.5" fill="#2fae35"/><polyline points="594.3,590.9499999999999 596.7,593.35 600.9,588.75" fill="none" stroke="#e6f4e6" stroke-width="1.35"/>
<circle cx="640" cy="591.15" r="6.5" fill="#2fae35"/><polyline points="636.8,590.9499999999999 639.2,593.35 643.4,588.75" fill="none" stroke="#e6f4e6" stroke-width="1.35"/>
<circle cx="682.4" cy="591.15" r="6.5" fill="#2fae35"/><polyline points="679.1999999999999,590.9499999999999 681.6,593.35 685.8,588.75" fill="none" stroke="#e6f4e6" stroke-width="1.35"/>
<circle cx="724.5" cy="591.15" r="6.5" fill="#2fae35"/><polyline points="721.3,590.9499999999999 723.7,593.35 727.9,588.75" fill="none" stroke="#e6f4e6" stroke-width="1.35"/>
<text x="754.7" y="587.85" font-size="8.8" fill="#333">PostgreSQL 11.9</text>
<rect x="754" y="592.65" width="13" height="12" fill="#f26a2e"/><path d="M760.5,594.65 L765,596.65 L765,601.65 L760.5,603.65 L756,601.65 L756,596.65 Z" fill="#fff"/><path d="M756,596.65 L760.5,598.65 L765,596.65 M760.5,598.65 L760.5,603.65" stroke="#f26a2e" stroke-width="0.7" fill="none"/>
<path d="M25.60,616.78 L30.00,621.38 L27.85,621.38 L27.85,625.68 L23.35,625.68 L23.35,621.38 L21.20,621.38 Z" fill="#25a82a"/>
<text x="35.2" y="624.68" font-size="8.8" fill="#1f4f8c">ON</text>
<text x="78.2" y="625.5799999999999" font-size="8.8" fill="#2460a8">DPAORA11R1_DPAORA11R1</text>
<text x="378.4" y="626.38" font-size="9.6" fill="#2460a8">Action</text>
<polygon points="407,620.78 412.8,620.78 409.9,624.38" fill="#2460a8"/>
<rect x="435.60" y="616.78" width="7.2" height="13" fill="#36ac3a"/>
<rect x="443.44" y="616.78" width="7.2" height="13" fill="#36ac3a"/>
<rect x="451.28" y="616.78" width="7.2" height="13" fill="#36ac3a"/>
<rect x="459.12" y="617.28" width="7.3" height="12" fill="#fff" stroke="#d2d6da" stroke-width="1"/>
<rect x="466.96" y="617.28" width="7.3" height="12" fill="#fff" stroke="#d2d6da" stroke-width="1"/>
<circle cx="508.4" cy="622.28" r="6.5" fill="#2fae35"/><polyline points="505.2,622.0799999999999 507.59999999999997,624.48 511.79999999999995,619.88" fill="none" stroke="#e6f4e6" stroke-width="1.35"/>
<circle cx="555" cy="622.28" r="6.5" fill="#2fae35"/><polyline points="551.8,622.0799999999999 554.2,624.48 558.4,619.88" fill="none" stroke="#e6f4e6" stroke-width="1.35"/>
<circle cx="597.5" cy="622.28" r="6.5" fill="#2fae35"/><polyline points="594.3,622.0799999999999 596.7,624.48 600.9,619.88" fill="none" stroke="#e6f4e6" stroke-width="1.35"/>
<circle cx="640" cy="622.28" r="6.5" fill="#d30a0a"/><rect x="639.1" y="618.68" width="1.8" height="4.2" fill="#fff"/><rect x="639.1" y="623.88" width="1.8" height="1.7" fill="#fff"/>
<circle cx="682.4" cy="622.28" r="6.5" fill="#2fae35"/><polyline points="679.1999999999999,622.0799999999999 681.6,624.48 685.8,619.88" fill="none" stroke="#e6f4e6" stroke-width="1.35"/>
<circle cx="724.5" cy="622.28" r="6.5" fill="#2fae35"/><polyline points="721.3,622.0799999999999 723.7,624.48 727.9,619.88" fill="none" stroke="#e6f4e6" stroke-width="1.35"/>
<text x="754.7" y="625.78" font-size="8.8" fill="#333">Oracle 11g R1</text>
</svg>
</body></html>
